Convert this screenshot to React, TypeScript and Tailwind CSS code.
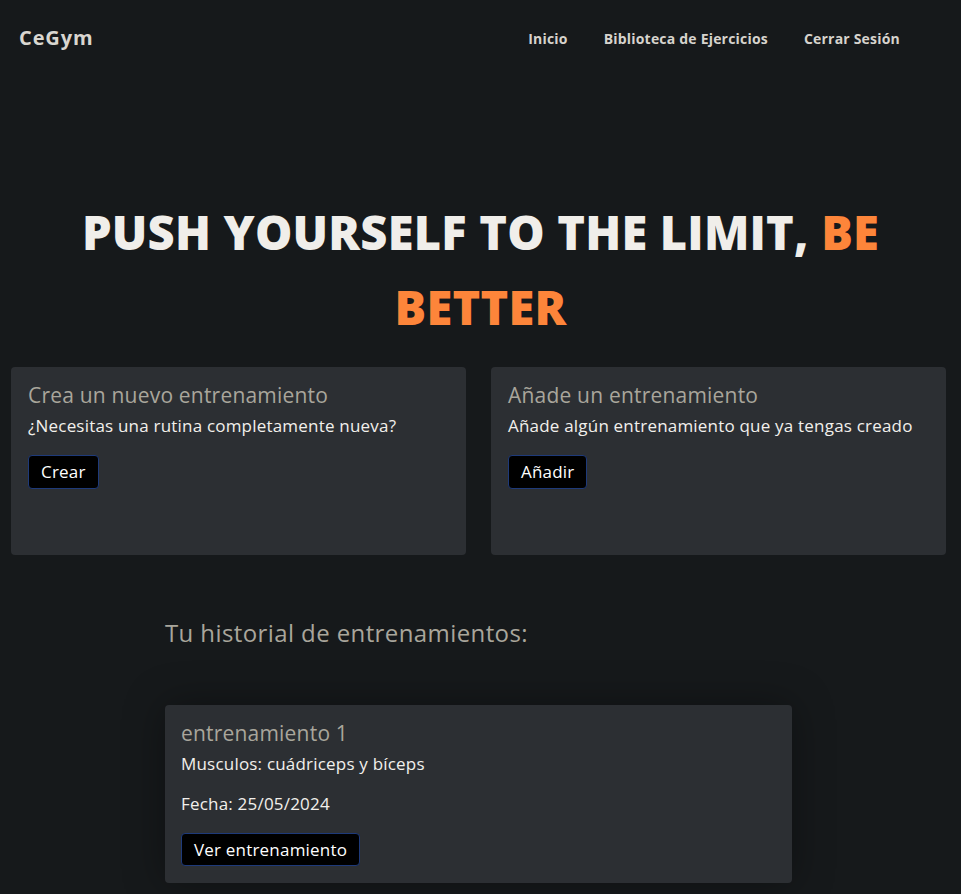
export default function App() {
  return (
    <div
      className="min-h-screen w-full bg-[#16191b] text-[#f2f0ec]"
      style={{ fontFamily: '"Open Sans", "Noto Sans", sans-serif' }}
    >
      {/* Navbar */}
      <nav className="flex items-center justify-between h-[76px] pl-[19px] pr-[61px]">
        <span className="text-[20px] font-bold tracking-[0.9px] text-[#d9d6d0]">CeGym</span>
        <div className="flex items-center gap-[36px] text-[14px] font-bold tracking-[0.2px] text-[#d6d3cd]">
          <a href="#">Inicio</a>
          <a href="#">Biblioteca de Ejercicios</a>
          <a href="#">Cerrar Sesión</a>
        </div>
      </nav>

      {/* Hero */}
      <h1 className="mt-[119px] mb-[22px] text-center text-[47px] leading-[75px] font-extrabold uppercase tracking-[0.2px] text-[#f0eeea] px-16">
        <span>Push yourself to the limit, </span>
        <span className="text-[#fd853a]">be</span>{" "}
        <span className="text-[#fd853a]">better</span>
      </h1>

      {/* Action cards */}
      <div className="grid grid-cols-2 gap-[25px] pl-[11px] pr-[15px]">
        <div className="h-[188px] rounded-[4px] bg-[#2c2f33] px-[17px] pt-[14px]">
          <h2 className="text-[21px] leading-[28px] tracking-[0.2px] text-[#a9a69c]">Crea un nuevo entrenamiento</h2>
          <p className="mt-[5px] text-[17px] leading-[24px] tracking-[0.2px]">¿Necesitas una rutina completamente nueva?</p>
          <button className="mt-[17px] h-[34px] px-[12px] rounded-[4px] bg-black border border-[#1e3a7a] text-[17px] tracking-[0.2px] text-white">
            Crear
          </button>
        </div>
        <div className="h-[188px] rounded-[4px] bg-[#2c2f33] px-[17px] pt-[14px]">
          <h2 className="text-[21px] leading-[28px] tracking-[0.2px] text-[#a9a69c]">Añade un entrenamiento</h2>
          <p className="mt-[5px] text-[17px] leading-[24px] tracking-[0.2px]">Añade algún entrenamiento que ya tengas creado</p>
          <button className="mt-[17px] h-[34px] px-[12px] rounded-[4px] bg-black border border-[#1e3a7a] text-[17px] tracking-[0.2px] text-white">
            Añadir
          </button>
        </div>
      </div>

      {/* History */}
      <div className="ml-[165px] w-[627px] pt-[62px] pb-[11px]">
        <h3 className="text-[24px] leading-[32px] tracking-[0.4px] text-[#a9a69c]">Tu historial de entrenamientos:</h3>
        <div className="mt-[56px] h-[178px] rounded-[4px] bg-[#2c2f33] px-[16px] pt-[14px] shadow-[0_0_40px_rgba(0,0,0,0.35)]">
          <h4 className="text-[21px] leading-[28px] tracking-[0.2px] text-[#a9a69c]">entrenamiento 1</h4>
          <p className="mt-[5px] text-[17px] leading-[24px] tracking-[0.2px]">Musculos: cuádriceps y bíceps</p>
          <p className="mt-[16px] text-[17px] leading-[24px] tracking-[0.2px]">Fecha: 25/05/2024</p>
          <button className="mt-[17px] h-[33px] px-[12px] rounded-[4px] bg-black border border-[#1e3a7a] text-[17px] tracking-[0.2px] text-white">
            Ver entrenamiento
          </button>
        </div>
      </div>
    </div>
  );
}
